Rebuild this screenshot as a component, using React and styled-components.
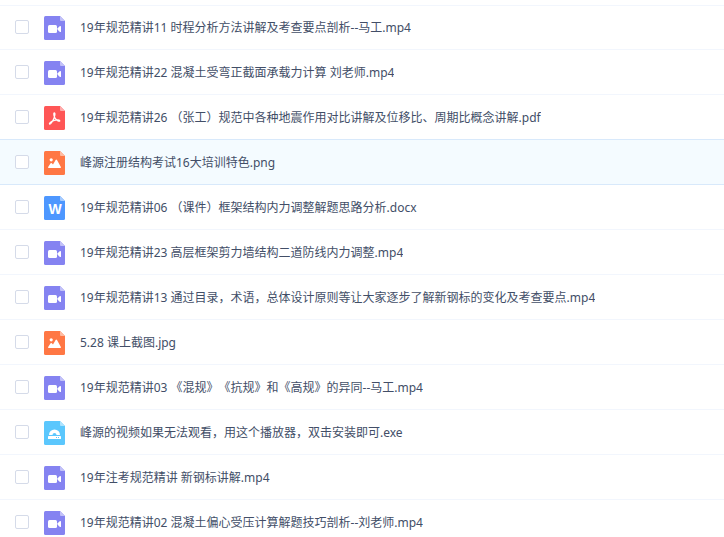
import React, { useState } from "react";
import styled, { createGlobalStyle } from "styled-components";

const files = [
  { id: 1, type: "video", name: "19年规范精讲11 时程分析方法讲解及考查要点剖析--马工.mp4" },
  { id: 2, type: "video", name: "19年规范精讲22 混凝土受弯正截面承载力计算 刘老师.mp4" },
  { id: 3, type: "pdf", name: "19年规范精讲26 （张工）规范中各种地震作用对比讲解及位移比、周期比概念讲解.pdf" },
  { id: 4, type: "image", name: "峰源注册结构考试16大培训特色.png" },
  { id: 5, type: "word", name: "19年规范精讲06 （课件）框架结构内力调整解题思路分析.docx" },
  { id: 6, type: "video", name: "19年规范精讲23 高层框架剪力墙结构二道防线内力调整.mp4" },
  { id: 7, type: "video", name: "19年规范精讲13 通过目录，术语，总体设计原则等让大家逐步了解新钢标的变化及考查要点.mp4" },
  { id: 8, type: "image", name: "5.28 课上截图.jpg" },
  { id: 9, type: "video", name: "19年规范精讲03 《混规》《抗规》和《高规》的异同--马工.mp4" },
  { id: 10, type: "exe", name: "峰源的视频如果无法观看，用这个播放器，双击安装即可.exe" },
  { id: 11, type: "video", name: "19年注考规范精讲 新钢标讲解.mp4" },
  { id: 12, type: "video", name: "19年规范精讲02 混凝土偏心受压计算解题技巧剖析--刘老师.mp4" },
];

const colors = {
  video: { page: "#8583f1", fold: "#c2c1f8" },
  pdf: { page: "#ff5656", fold: "#ffabab" },
  image: { page: "#ff7744", fold: "#ffbba1" },
  word: { page: "#4d97ff", fold: "#a6cbff" },
  exe: { page: "#5bc7fd", fold: "#ade3fe" },
};

const glyphs = {
  video: (
    <g fill="#fff">
      <rect x="4" y="9" width="9" height="8" rx="1.5" />
      <path d="M13.6 12.2 15.6 10.2Q17 9.4 17 10.6V15.4Q17 16.6 15.6 15.8L13.6 13.8Z" />
    </g>
  ),
  pdf: (
    <path
      d="M10.2 6.8C11.6 6.8 10.8 10.4 9.6 13 8.4 15.7 6.6 18.6 5.6 18.1 4.6 17.3 7.6 15.2 10.4 14.4 13 13.7 15.8 13.7 15.8 14.8 15.6 16 12.6 14.6 11.2 12.4 9.8 10.2 9.3 7 10.2 6.8Z"
      fill="none"
      stroke="#fff"
      strokeWidth="1.2"
    />
  ),
  image: (
    <g fill="#fff">
      <circle cx="7.2" cy="8.8" r="1.6" />
      <path d="M4 16.2 6.6 12.2Q7.2 11.6 7.8 12.2L9 13.6 11.6 8.9Q12.3 8 13 8.9L17 16.2Q17 17 16.2 17H4.8Q4 17 4 16.2Z" />
    </g>
  ),
  exe: (
    <g>
      <path d="M5 14A5.5 5.5 0 0 1 16 14H12.5A2 2 0 0 0 8.5 14Z" fill="#fff" />
      <rect x="4" y="15" width="13" height="3" rx="0.6" fill="#fff" />
      <path d="M12 16h1v1h-1zM14 16h1v1h-1z" fill="#5bc7fd" />
    </g>
  ),
};

function FileIcon({ type }) {
  const { page, fold } = colors[type];

  return (
    <Icon viewBox="0 0 21 24" aria-hidden="true">
      <path d="M1.5 0H16L21 5V22.5Q21 24 19.5 24H1.5Q0 24 0 22.5V1.5Q0 0 1.5 0Z" fill={page} />
      <path d="M16 0 21 5H17Q16 5 16 4Z" fill={fold} />
      {glyphs[type]}
      {type === "word" && (
        <Letter x="11" y="18" textAnchor="middle">
          W
        </Letter>
      )}
    </Icon>
  );
}

function FileRow({ file, active, beforeActive, checked, onToggle, onHover }) {
  return (
    <Row
      $active={active}
      $lined={active || beforeActive}
      onMouseEnter={() => onHover(file.id)}
    >
      <Label>
        <Checkbox type="checkbox" checked={checked} onChange={() => onToggle(file.id)} />
        <FileInfo>
          <FileIcon type={file.type} />
          <FileName>{file.name}</FileName>
        </FileInfo>
      </Label>
    </Row>
  );
}

function App() {
  const [activeId, setActiveId] = useState(4);
  const [selected, setSelected] = useState([]);

  const handleToggle = (id) => {
    setSelected((prev) =>
      prev.includes(id) ? prev.filter((item) => item !== id) : [...prev, id]
    );
  };

  return (
    <>
      <GlobalStyle />
      <FileList>
        {files.map((file, index) => (
          <FileRow
            key={file.id}
            file={file}
            active={file.id === activeId}
            beforeActive={files[index + 1]?.id === activeId}
            checked={selected.includes(file.id)}
            onToggle={handleToggle}
            onHover={setActiveId}
          />
        ))}
      </FileList>
    </>
  );
}

export default App;

const GlobalStyle = createGlobalStyle`
  * {
    box-sizing: border-box;
  }
  body {
    margin: 0;
    background-color: #fff;
    color: #424e67;
    font-family: "Noto Sans", "Noto Sans CJK SC", sans-serif;
    font-size: 12px;
    line-height: 18px;
    text-spacing-trim: space-all;
  }
`;

const FileList = styled.ul`
  margin: 0;
  padding: 5px 0 0;
  list-style: none;
  overflow: hidden;
`;

const Row = styled.li`
  height: 45px;
  background-color: ${(props) => (props.$active ? "#f4fbff" : "#fff")};
  border-bottom: 1px solid ${(props) => (props.$lined ? "#d8e9fb" : "#f2f6fd")};

  &:first-child {
    box-shadow: inset 0 1px #f2f6fd;
  }
`;

const Label = styled.label`
  display: flex;
  align-items: center;
  height: 100%;
  padding: 0 15px;
  cursor: pointer;
`;

const Checkbox = styled.input`
  appearance: none;
  flex: none;
  width: 14px;
  height: 14px;
  margin: 0 15px 0 0;
  border: 1px solid #d5dbe9;
  border-radius: 2px;
  background-color: #fff;

  &:checked {
    border-color: #3b8cff;
    background-color: #3b8cff;
  }
`;

const FileInfo = styled.span`
  display: flex;
  align-items: center;
  min-width: 0;
  padding-top: 2px;
`;

const Icon = styled.svg`
  flex: none;
  width: 21px;
  height: 24px;
  margin-right: 15px;
`;

const Letter = styled.text`
  fill: #fff;
  font-family: "Liberation Sans", sans-serif;
  font-size: 14px;
  font-weight: bold;
`;

const FileName = styled.span`
  min-width: 0;
  overflow: hidden;
  text-overflow: ellipsis;
  white-space: nowrap;
`;
